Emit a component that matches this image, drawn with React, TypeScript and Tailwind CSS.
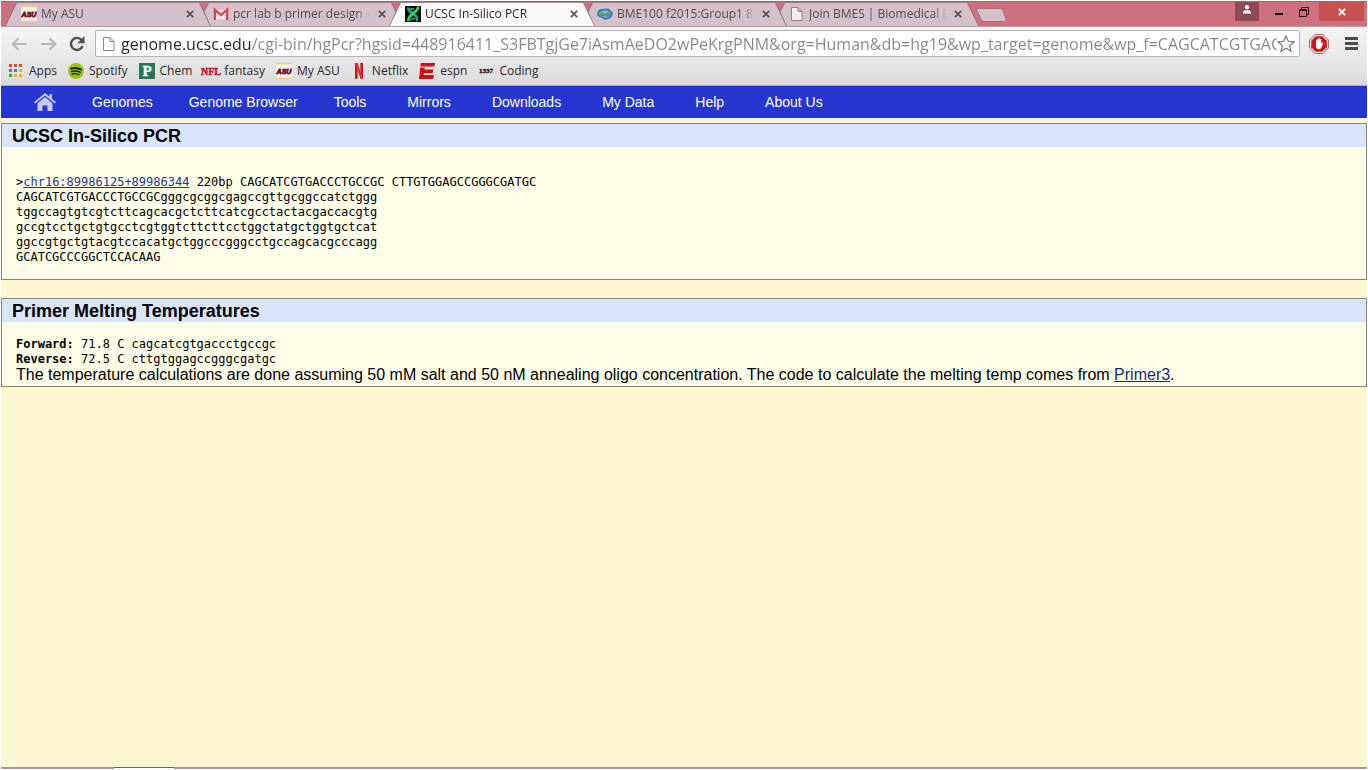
import { type ReactNode } from "react";
import clsx from "clsx";

const PAGE_URL =
  "genome.ucsc.edu/cgi-bin/hgPcr?hgsid=448916411_S3FBTgjGe7iAsmAeDO2wPeKrgPNM&org=Human&db=hg19&wp_target=genome&wp_f=CAGCATCGTGACCCT";

function AsuIcon() {
  return (
    <svg className="size-4 shrink-0" viewBox="0 0 16 16">
      <rect width="16" height="16" fill="#fdf6ee" />
      <path d="M0 .8h16M0 15.2h16" stroke="#f3b64a" strokeWidth="1" />
      <text
        x="8"
        y="11"
        textAnchor="middle"
        fontFamily="Liberation Sans"
        fontSize="7"
        fontWeight="bold"
        fontStyle="italic"
        fill="#7a1530"
        stroke="#7a1530"
        strokeWidth=".9"
      >
        ASU
      </text>
    </svg>
  );
}

function GmailIcon() {
  return (
    <svg className="size-4 shrink-0" viewBox="0 0 16 16" fill="none">
      <path d="M2 3.500h12v10H2z" fill="#efe3e6" />
      <path d="M1.900 14V3.600L8 9l6.100-5.400V14" stroke="#d9453c" strokeWidth="2.200" />
    </svg>
  );
}

function DnaIcon() {
  return (
    <svg className="size-4 shrink-0" viewBox="0 0 16 16" fill="none">
      <rect width="16" height="16" fill="#030d0a" />
      <path d="M3.500 1.500C2.500 5 6 6.500 8.500 8s4.500 3.500 3 7" stroke="#1fa58c" strokeWidth="2.600" />
      <path d="M13 .5C13.500 4 10.500 5.500 8 7.500S3 11 3.500 15" stroke="#35d65c" strokeWidth="2.800" />
      <path d="M4.500 3.200 9 2.500M5.500 13.200l4.500-.7" stroke="#2bbf6c" strokeWidth="1.500" />
    </svg>
  );
}

function WikiIcon() {
  return (
    <svg className="size-4 shrink-0" viewBox="0 0 16 16">
      <path d="M4 3 11.500 2.500 16 7l-2 5-6 2L0 9.500l1-5z" fill="#3a78b8" />
      <path d="M5 4.800 10.500 4.500l3.500 3-1.500 3-4.500 1.500L2 9l.5-2.500z" fill="#79bde4" />
      <path d="m2 8 3-2 3 2 3-2 3 2-3 3-3-1-3 1z" fill="#5f9c55" />
    </svg>
  );
}

function PageIcon() {
  return (
    <svg className="size-4 shrink-0" viewBox="0 0 16 16">
      <path
        d="M2.500 1.500h6.500l4 4v9H2.500zM9 1.500v4h4"
        fillOpacity=".7"
        fill="#fff"
        stroke="#8d8688"
      />
    </svg>
  );
}

function AppsIcon() {
  const colors = ["#e0483e", "#e0483e", "#e0483e", "#3a9c5a", "#3f7ee0", "#eab02c", "#3a9c5a", "#eab02c", "#eab02c"];
  return (
    <svg className="size-4 shrink-0" viewBox="0 0 16 16">
      {colors.map((color, i) => (
        <rect key={i} x={1 + (i % 3) * 5} y={1 + Math.floor(i / 3) * 5} width="3" height="3" fill={color} />
      ))}
    </svg>
  );
}

function SpotifyIcon() {
  return (
    <svg className="size-4 shrink-0" viewBox="0 0 16 16" fill="none">
      <circle cx="8" cy="8" r="8" fill="#99c11c" />
      <g stroke="#1d2408" strokeLinecap="round">
        <path d="M3 5.600c3.300-1 7.200-.7 10.200 1" strokeWidth="1.900" />
        <path d="M3.500 8.400c3-.8 6-.5 8.600.9" strokeWidth="1.600" />
        <path d="M4 11c2.500-.6 4.900-.4 7 .8" strokeWidth="1.300" />
      </g>
    </svg>
  );
}

function PiazzaIcon() {
  return (
    <svg className="size-4 shrink-0" viewBox="0 0 16 16">
      <rect width="16" height="16" fill="#227a5b" />
      <text
        x="8"
        y="13"
        textAnchor="middle"
        fontFamily="Liberation Serif"
        fontSize="15"
        fontWeight="bold"
        fill="#fff"
        stroke="#fff"
        strokeWidth=".4"
      >
        P
      </text>
    </svg>
  );
}

function NflIcon() {
  return (
    <svg className="size-4 shrink-0 overflow-visible" viewBox="0 0 16 16">
      <text
        x="8"
        y="12"
        textAnchor="middle"
        fontFamily="Liberation Sans Narrow, Liberation Serif"
        fontSize="10"
        fontWeight="bold"
        fill="#c8102e"
        stroke="#c8102e"
        strokeWidth=".5"
      >
        NFL
      </text>
    </svg>
  );
}

function NetflixIcon() {
  return (
    <svg className="size-4 shrink-0" viewBox="0 0 16 16">
      <path d="M4 0h2.600v15.600L4 16zM9.400 0H12v16l-2.600-.4z" fill="#c4161c" />
      <path d="M4 0h2.600L12 16l-2.600-.4z" fill="#ee2a2e" />
    </svg>
  );
}

function EspnIcon() {
  return (
    <svg className="size-4 shrink-0" viewBox="0 0 16 16" fill="#cf1016">
      <path d="M1.800 0H16l-.6 3.500H1.300zM1.200 4.500h4.600l-.3 2H14.400l-.7 3.800H5l-.2 1.700h10l-.6 4H0z" />
    </svg>
  );
}

function LeetIcon() {
  return (
    <svg className="size-4 shrink-0" viewBox="0 0 16 16">
      <text
        x="8"
        y="10"
        textAnchor="middle"
        fontFamily="Liberation Serif"
        fontSize="7"
        fontWeight="bold"
        fill="#111"
        stroke="#111"
        strokeWidth=".3"
      >
        1337
      </text>
    </svg>
  );
}

function CloseIcon({ className }: { className?: string }) {
  return (
    <svg className={className} viewBox="0 0 8 8" fill="none" stroke="currentColor" strokeWidth="1.700">
      <path d="m.8.8 6.400 6.400M7.200.8.800 7.200" />
    </svg>
  );
}

interface Tab {
  title: string;
  icon: ReactNode;
  active?: boolean;
  className: string;
}

const tabs: Tab[] = [
  { title: "My ASU", icon: <AsuIcon />, className: "z-20" },
  { title: "pcr lab b primer design - k", icon: <GmailIcon />, className: "z-10" },
  { title: "UCSC In-Silico PCR", icon: <DnaIcon />, active: true, className: "z-30" },
  { title: "BME100 f2015:Group1 8am", icon: <WikiIcon />, className: "z-20" },
  { title: "Join BMES | Biomedical En", icon: <PageIcon />, className: "z-10" },
];

const bookmarks = [
  { label: "Apps", icon: <AppsIcon /> },
  { label: "Spotify", icon: <SpotifyIcon /> },
  { label: "Chem", icon: <PiazzaIcon /> },
  { label: "fantasy", icon: <NflIcon /> },
  { label: "My ASU", icon: <AsuIcon /> },
  { label: "Netflix", icon: <NetflixIcon /> },
  { label: "espn", icon: <EspnIcon /> },
  { label: "Coding", icon: <LeetIcon /> },
];

const menu = ["Genomes", "Genome Browser", "Tools", "Mirrors", "Downloads", "My Data", "Help", "About Us"];

function BrowserTab({ title, icon, active, className }: Tab) {
  return (
    <div
      className={clsx(
        "relative -mr-3.5 h-6 w-[206px] shrink-0 [clip-path:polygon(0_100%,11px_0,calc(100%-11px)_0,100%_100%)]",
        active ? "bg-[#a08a8e]" : "bg-[#96797f]",
        className
      )}
    >
      {/* Fill sits one pixel inside the outline */}
      <div
        className={clsx(
          "flex h-full items-center pr-4 pl-4 [clip-path:polygon(1px_100%,12px_1px,calc(100%-12px)_1px,calc(100%-1px)_100%)]",
          active ? "bg-[#fafafa] text-[#2c1e2c]" : "bg-[#d3c0ca] text-[#5c4a53]"
        )}
      >
        {icon}
        <button
          className={clsx(
            "ml-1 w-[138px] overflow-hidden text-left text-[12px] leading-5 whitespace-nowrap",
            "[mask-image:linear-gradient(90deg,#000_124px,transparent)]"
          )}
        >
          {title}
        </button>
        <button className="ml-[7px] text-[#5f5055]" aria-label={`Close ${title}`}>
          <CloseIcon className="size-2" />
        </button>
      </div>
    </div>
  );
}

function TitleBar() {
  return (
    <div className="flex h-[25px] items-end border-t border-[#a8606a] bg-[#cf707e] pr-[3px] pl-1">
      {tabs.map((tab) => (
        <BrowserTab key={tab.title} {...tab} />
      ))}
      <button className="mb-1 ml-2.5 h-3.5 w-8" aria-label="New tab">
        <svg viewBox="0 0 32 14" className="h-3.5 w-8">
          <path
            d="M3 .5h22q2 0 3 2l3 9q.6 2-1.500 2H9q-2 0-3-2L2 2.500Q1.500.5 3 .5z"
            fill="#d3c0ca"
            stroke="#a8707a"
          />
        </svg>
      </button>
      {/* Window controls */}
      <div className="ml-auto flex h-[19px] self-start text-[#1d1013]">
        <button className="flex w-6 items-center justify-center bg-[#8c4b56] text-white" aria-label="Profile">
          <svg viewBox="0 0 8 9" className="mb-1 h-[9px] w-2" fill="currentColor">
            <circle cx="4" cy="2.200" r="2.100" />
            <path d="M0 8.500V7q1-2 4-2t4 2v1.500z" />
          </svg>
        </button>
        <button className="flex w-10 items-center justify-center pt-1" aria-label="Minimize">
          <span className="h-0.5 w-2 bg-current" />
        </button>
        <button className="flex w-5 items-center" aria-label="Restore">
          <svg viewBox="0 0 10 10" className="size-2.5" fill="none" stroke="currentColor">
            <path d="M.5 2.500h7v7h-7zM.5 3.500h7M2.500 2V.5h7v7H8" />
          </svg>
        </button>
        <button className="flex w-[45px] items-center justify-center bg-[#c75050] text-white" aria-label="Close window">
          <CloseIcon className="size-2" />
        </button>
      </div>
    </div>
  );
}

function Toolbar() {
  return (
    <div className="flex h-[34px] items-center border-t border-[#b39ba0] pr-[9px]">
      <button className="ml-2.5 text-[#b9b9b9]" aria-label="Back">
        <svg viewBox="0 0 16 14" className="h-3.5 w-4" fill="none" stroke="currentColor" strokeWidth="2.200">
          <path d="M15.500 7H2M7.500 1.200 1.700 7l5.800 5.800" />
        </svg>
      </button>
      <button className="ml-3.5 text-[#b9b9b9]" aria-label="Forward">
        <svg viewBox="0 0 16 14" className="h-3.5 w-4" fill="none" stroke="currentColor" strokeWidth="2.200">
          <path d="M0 7h13.500M8.500 1.200 14.300 7l-5.800 5.800" />
        </svg>
      </button>
      <button className="ml-3 text-[#4f4f4f]" aria-label="Reload">
        <svg viewBox="0 0 16 16" className="size-4" fill="none" stroke="currentColor" strokeWidth="2.400">
          <path d="M12.700 4.200A6 6 0 1 0 13.600 10" />
          <path d="M15.500 0v7.200H8.300z" fill="currentColor" stroke="none" />
        </svg>
      </button>
      <div className="ml-2.5 flex h-[27px] min-w-0 flex-1 items-center rounded-xs border border-[#b8b5b6] bg-white pr-1 pl-[5px]">
        <PageIcon />
        <input
          type="text"
          aria-label="Address"
          defaultValue={PAGE_URL}
          className="ml-1 min-w-0 flex-1 bg-[linear-gradient(90deg,#222_130px,#878787_130px)] bg-clip-text text-[16px] leading-6 text-transparent outline-none"
        />
        <button aria-label="Bookmark this page">
          <svg viewBox="0 0 18 18" className="size-[18px]" fill="#fff" stroke="#777" strokeWidth="1.200">
            <path d="m9 1 2.300 5.300 5.700.5-4.300 3.800 1.300 5.700-5-3-5 3 1.300-5.700L1 6.800l5.700-.5z" />
          </svg>
        </button>
      </div>
      <button className="ml-[9px]" aria-label="AdBlock">
        <svg viewBox="0 0 20 20" className="size-5">
          <path d="M6 .7h8L19.300 6v8L14 19.300H6L.7 14V6z" fill="#fff" stroke="#94504c" />
          <path d="M6.700 2.200h6.600l4.500 4.500v6.600l-4.500 4.500H6.700l-4.500-4.500V6.700z" fill="#d3101a" />
          <path
            d="M7 10V6.200q.6-.8 1.200 0V5q.7-.9 1.400 0v-.4q.7-.9 1.400 0V5.300q.7-.8 1.300 0V10l1-1.300q1-.5 1 .5l-2 4.600q-.8 1.500-2.600 1.500-2.700 0-2.700-3z"
            fill="#fff"
          />
        </svg>
      </button>
      <button className="ml-4 text-[#4b4b4b]" aria-label="Menu">
        <svg viewBox="0 0 13 13" className="size-[13px]" fill="currentColor">
          <path d="M0 0h13v3H0zM0 5h13v3H0zM0 10h13v3H0z" />
        </svg>
      </button>
    </div>
  );
}

function Bookmarks() {
  return (
    <div className="flex h-[26px] items-center gap-[11px] border-b border-[#a9aaaf] pb-1 pl-[7px]">
      {bookmarks.map(({ label, icon }) => (
        <a key={label} href="#" className="flex items-center gap-[5px] text-[12px] leading-5 text-[#2b2b2b]">
          {icon}
          {label}
        </a>
      ))}
    </div>
  );
}

function SiteMenu() {
  return (
    <nav className="flex h-8 items-center bg-[#2636d1] pl-[33px] text-[14px] leading-5 text-white">
      <a href="#" className="mr-9" aria-label="Home">
        <svg viewBox="0 0 22 18" className="h-[18px] w-[22px]" fill="#c3cdfa">
          <path d="M11 0 0 9.200l1.200 1.300L11 2.500l9.800 8 1.200-1.300-4-3.400V1h-2.500v2.700z" />
          <path d="m11 4 7.500 6.200V18h-5v-5.500h-5V18h-5v-7.800z" />
        </svg>
      </a>
      {menu.map((item, i) => (
        <a key={item} href="#" className={i < 2 ? "mr-9" : "mr-[41px]"}>
          {item}
        </a>
      ))}
    </nav>
  );
}

function Section({ title, children }: { title: string; children: ReactNode }) {
  return (
    <section className="border border-[#84857c] bg-[#fffee8]">
      <h2 className="bg-[#d9e4f8] pt-0.5 pl-2.5 text-[18px] leading-[21px] font-bold">{title}</h2>
      <div className="px-3.5">{children}</div>
    </section>
  );
}

export default function App() {
  return (
    <div className="flex min-h-screen flex-col bg-white p-px text-black">
      <header className="font-['Open_Sans',sans-serif]">
        <TitleBar />
        <div className="bg-linear-to-b from-[#f6f6f6] to-[#dadada]">
          <Toolbar />
          <Bookmarks />
        </div>
      </header>
      <main className="flex-1 bg-[#fef8d2] font-['Liberation_Sans',Arial,sans-serif]">
        <SiteMenu />
        <div className="mt-[5px] space-y-[18px]">
          <Section title="UCSC In-Silico PCR">
            <pre className="pt-7 pb-3.5 font-['DejaVu_Sans_Mono',monospace] text-[12px] leading-[15px]">
              {">"}
              <a href="#" className="text-[#1c3a8c] underline">
                chr16:89986125+89986344
              </a>
              {` 220bp CAGCATCGTGACCCTGCCGC CTTGTGGAGCCGGGCGATGC
CAGCATCGTGACCCTGCCGCgggcgcggcgagccgttgcggccatctggg
tggccagtgtcgtcttcagcacgctcttcatcgcctactacgaccacgtg
gccgtcctgctgtgcctcgtggtcttcttcctggctatgctggtgctcat
ggccgtgctgtacgtccacatgctggcccgggcctgccagcacgcccagg
GCATCGCCCGGCTCCACAAG`}
            </pre>
          </Section>
          <Section title="Primer Melting Temperatures">
            <pre className="pt-[15px] font-['DejaVu_Sans_Mono',monospace] text-[12px] leading-[15px]">
              <b>Forward:</b>
              {" 71.8 C cagcatcgtgaccctgccgc\n"}
              <b>Reverse:</b>
              {" 72.5 C cttgtggagccgggcgatgc"}
            </pre>
            <p className="pb-[3px] text-[16px] leading-4">
              The temperature calculations are done assuming 50 mM salt and 50 nM annealing oligo concentration. The
              code to calculate the melting temp comes from{" "}
              <a href="#" className="text-[#1c2a6c] underline">
                Primer3
              </a>
              .
            </p>
          </Section>
        </div>
      </main>
      {/* Top edge of the taskbar */}
      <footer className="flex h-0.5 bg-[#b3978f] pl-[113px]">
        <div className="w-[60px] border-t border-[#6b6350] bg-white" />
      </footer>
    </div>
  );
}
